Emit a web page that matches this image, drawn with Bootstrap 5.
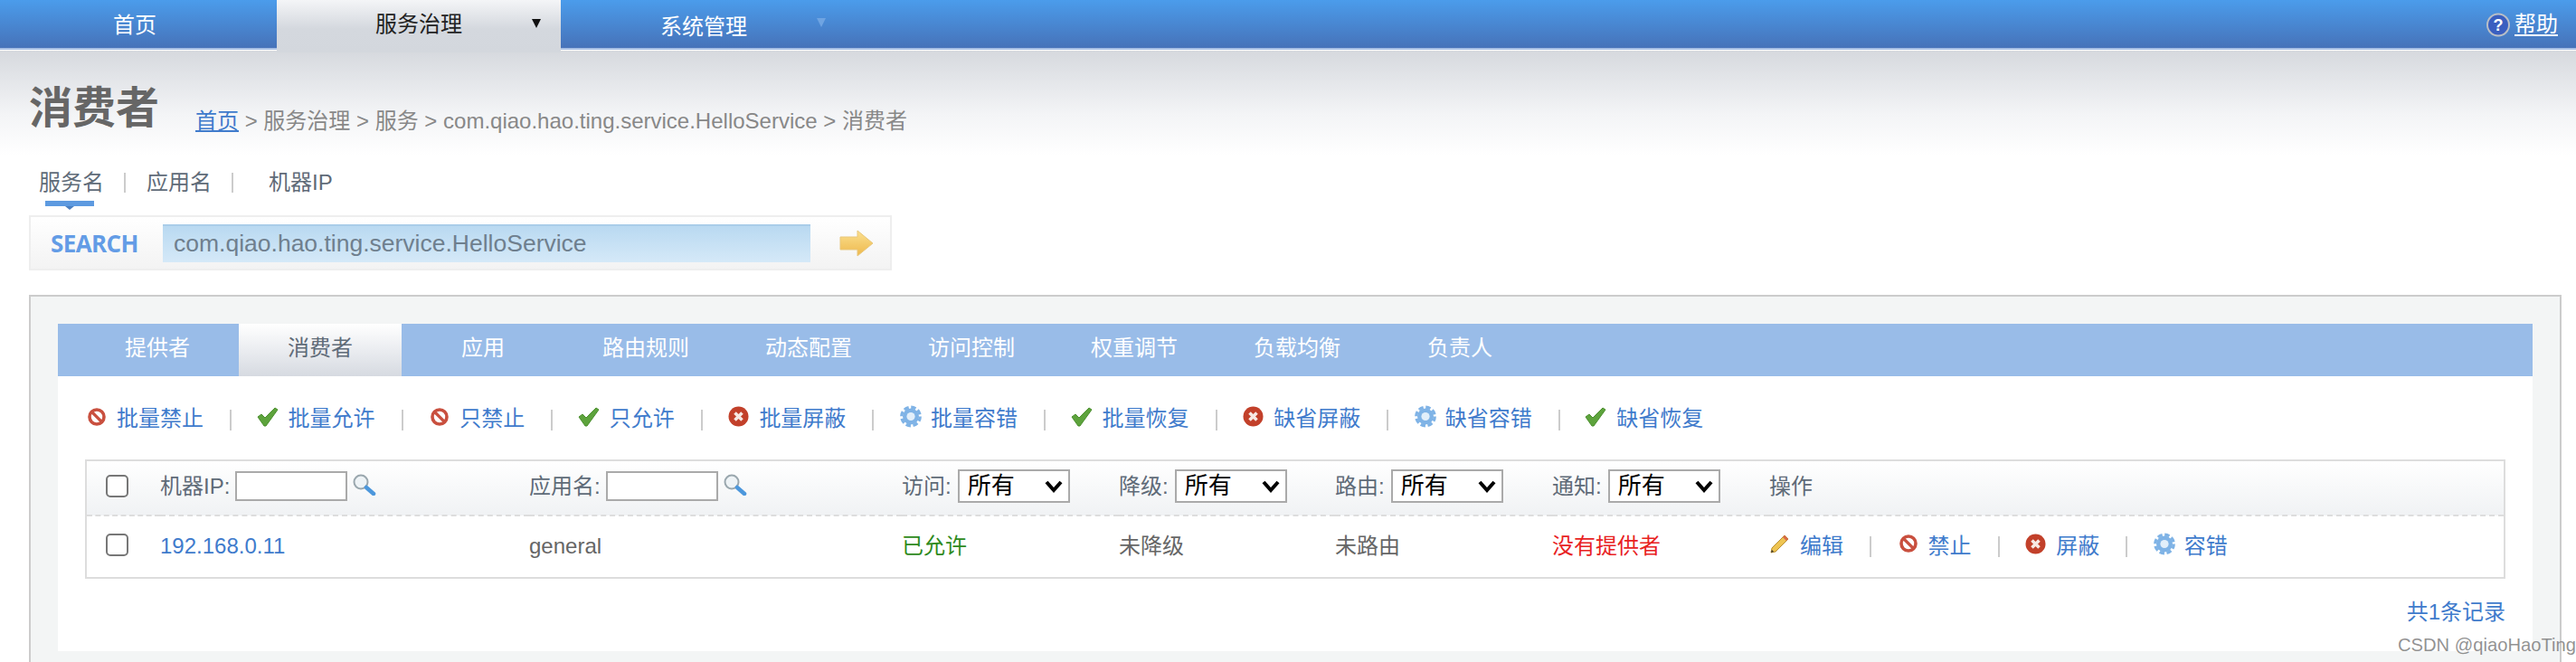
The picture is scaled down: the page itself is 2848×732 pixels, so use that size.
<!DOCTYPE html>
<html lang="zh-CN">
<head>
<meta charset="utf-8">
<title>消费者</title>
<link href="https://cdn.jsdelivr.net/npm/bootstrap@5.3.0/dist/css/bootstrap.min.css" rel="stylesheet">
<style>
html,body{height:732px;overflow:hidden;background:#fff}
body{font-family:"Liberation Sans","Noto Sans CJK SC",sans-serif;font-size:24px;line-height:32px;color:#666;position:relative}
a{text-decoration:none;color:#3f7bcc}
.topbar{height:56px;padding:0;flex-wrap:nowrap;justify-content:flex-start;align-items:stretch;background:linear-gradient(#fff,#fff) bottom/100% 1px no-repeat,linear-gradient(#a8bfe4,#a8bfe4) 0 53px/100% 2px no-repeat,linear-gradient(#4b9ceb,#4670b6)}
.topitem{color:#fff;display:flex;align-items:center;height:54px;position:relative}
.ti-home{width:306px;padding-left:125px;padding-top:1px}
.ti-svc{width:314px;padding-left:109px;padding-bottom:5px;color:#222;height:58px;background:linear-gradient(#f4f5f7,#d4d8de 55%,#d3d7dd)}
.ti-sys{width:400px;padding-left:110px;padding-top:5px}
.tri{width:0;height:0;border-left:5px solid transparent;border-right:5px solid transparent;border-top:10px solid #111}
.ti-svc .tri{margin-left:77px;margin-top:-2px}
.ti-sys .tri{margin-left:77px;margin-top:-10px;border-top-color:#6fa4e2}
.helpbox{margin-left:auto;margin-right:20px;display:flex;align-items:center;gap:5px;height:54px}
.helpbox a{color:#fff;text-decoration:underline;text-underline-offset:3px}
.pagehead{height:116px;background:linear-gradient(#d6d9de,#f3f4f6 60%,#fff);padding:36px 0 0 32px;display:flex;align-items:flex-start}
.pagetitle{font-size:48px;line-height:56px;font-weight:700;color:#666;margin:0;width:184px;flex:none}
.crumbs{color:#888;margin-top:26px;white-space:nowrap}
.crumbs a{color:#3f7bcc;text-decoration:underline}
.subtabs{height:66px;padding:14px 0 0 43px;color:#5f6b78;position:relative;display:flex}
.subtabs .st-sep{width:2px;height:22px;background:#ccc;margin:5px 23px 0 22px}
.subtabs .st-sep.wide{margin-right:39px}
.st-mark{position:absolute;left:50px;top:50px;width:54px;height:6px;background:#5d9ae0}
.st-mark::after{content:"";position:absolute;left:22px;top:6px;border-left:5px solid transparent;border-right:5px solid transparent;border-top:4px solid #4b7fc0}
.searchbar{margin-left:32px;width:954px;height:61px;border:2px solid #eee;background:linear-gradient(#fff,#f3f3f3);display:flex;align-items:center;padding-left:22px}
.searchword{font-family:"Open Sans",sans-serif;font-weight:700;font-size:26px;color:#639ce6;width:124px;letter-spacing:-.6px}
.searchinput{width:716px;height:42px;border:0;border-top:2px solid #a9cde9;background:linear-gradient(#b9d9f1,#d5e9f8);color:#6f7f8e;padding:0 12px;font-size:26.5px;font-family:inherit;outline:0;border-radius:0}
.gobtn{margin-left:32px;display:block}
.mainbox{margin:27px 0 0 32px;width:2800px;height:406px;border:2px solid #ccc;border-bottom:0;background:#f3f5f5;padding:30px 30px 0}
.tabstrip{height:58px;background:#99bce8;padding:0 0 0 20px;display:flex;margin:0;list-style:none}
.tabstrip li{width:180px;text-align:center;color:#fff;line-height:54px}
.tabstrip li.on{background:linear-gradient(#fff,#d6dae1);color:#5f6b78}
.whitepanel{background:#fff;height:304px;padding:0 30px}
.toolbar{height:92px;display:flex;align-items:center;padding-top:2px}
.act{display:flex;align-items:center;white-space:nowrap}
.iconbox{width:35px;height:24px;flex:none;display:flex;align-items:center;margin-top:-5px}
.iconbox.narrow{width:34px}
.vsep{width:2px;height:23px;background:#ccc;margin:2px 27.6px 0 29px;flex:none}
.i-ban{width:20px;height:20px;margin-left:3px}
.i-ok{width:24px;height:22px}
.i-x{width:23px;height:23px;margin-left:1px}
.i-gear{width:24px;height:25px;margin-left:1px}
.i-pen{width:23px;height:23px}
.gridframe{border:2px solid #ddd;width:2676px}
.datatable{table-layout:fixed;width:2672px;margin:0;--bs-table-bg:transparent;color:#666}
.datatable th,.datatable td{padding:0;border:0;vertical-align:middle;font-weight:400;white-space:nowrap;box-shadow:none}
.datatable thead tr{height:60px;background:linear-gradient(#fff,#f0f2f4)}
.datatable thead th{border-bottom:2px dashed #ddd;color:#5f6b78;padding-bottom:4px}
.datatable tbody tr{height:68px}
.datatable tbody td{padding-bottom:2px}
.datatable td.cc,.datatable th.cc{padding-left:21px;padding-bottom:4px}
.tick{appearance:none;-webkit-appearance:none;display:block;width:25px;height:25px;border:2px solid #777;border-radius:5px;background:#fff;margin:0}
.cellflex{display:flex;align-items:center}
.txtfilter{width:124px;height:33px;border:2px solid #aaa;background:#fff;margin-left:6px;padding:0 4px;border-radius:0;font-size:20px}
.seek{margin-left:6px;margin-top:-4px;display:block}
.dropfilter{appearance:none;-webkit-appearance:none;width:124px;height:37px;border:2px solid #aaa;border-radius:0;margin-left:7px;padding:0 0 0 9px;font-size:26px;line-height:33px;color:#000;font-family:inherit;background:#fff url("data:image/svg+xml,%3Csvg xmlns='http://www.w3.org/2000/svg' width='20' height='14'%3E%3Cpath d='M2 2l8 9 8-9' fill='none' stroke='%23000' stroke-width='4'/%3E%3C/svg%3E") no-repeat 94px 10px}
.st-ok{color:#2e8a1c}.st-bad{color:#e8221f}
.sumline{text-align:right;width:2676px;margin-top:21px;line-height:32px}
.wm{position:absolute;right:0;top:699px;font-size:20.2px;line-height:28px;color:rgba(110,110,110,.75);white-space:nowrap}
</style>
</head>
<body>
<svg width="0" height="0" class="position-absolute">
<defs>
<symbol id="s-ban" viewBox="0 0 20 20"><circle cx="10" cy="10" r="8" fill="#fff" stroke="#c9503f" stroke-width="3.6"/><path d="M4.6 4.6l10.8 10.8" stroke="#c9503f" stroke-width="3.4"/></symbol>
<symbol id="s-ok" viewBox="0 0 24 22"><path d="M1 11l4-3 4 4L20 1l3 2L10 21h-2z" fill="#5da33c" stroke="#4b8f2e" stroke-width="1"/></symbol>
<symbol id="s-x" viewBox="0 0 23 23"><circle cx="11.5" cy="11.5" r="11" fill="#c2402a"/><path d="M7.5 7.5l8 8M15.5 7.5l-8 8" stroke="#f7e9e4" stroke-width="3.6"/></symbol>
<symbol id="s-gear" viewBox="0 0 24 25"><circle cx="12" cy="12.5" r="9" fill="#7fb3e6"/><circle cx="12" cy="12.5" r="10.2" fill="none" stroke="#7fb3e6" stroke-width="3.4" stroke-dasharray="5.4 2.6"/><circle cx="12" cy="12.5" r="4.6" fill="#e2effa"/></symbol>
<symbol id="s-pen" viewBox="0 0 23 23"><path d="M17 2l4 4L7 20l-5 1 1-5z" fill="#eec452" stroke="#b98f2e" stroke-width="1"/><path d="M17 2l4 4-2 2-4-4z" fill="#d9694a"/><path d="M2 21l1-3 2 2z" fill="#333"/></symbol>
<symbol id="s-seek" viewBox="0 0 26 24"><circle cx="9" cy="9" r="7.5" fill="#eef3f6" stroke="#9aa7ae" stroke-width="2"/><path d="M15 15l8 7" stroke="#4c97dc" stroke-width="4.5" stroke-linecap="round"/></symbol>
<linearGradient id="g-go" x1="0" y1="0" x2="0" y2="1"><stop offset="0" stop-color="#fbe08f"/><stop offset="1" stop-color="#eeb84c"/></linearGradient>
</defs>
</svg>

<nav class="navbar topbar">
  <div class="topitem ti-home">首页</div>
  <div class="topitem ti-svc">服务治理<span class="tri"></span></div>
  <div class="topitem ti-sys">系统管理<span class="tri"></span></div>
  <div class="helpbox">
    <svg width="26" height="27" viewBox="0 0 26 27"><circle cx="13" cy="13.5" r="12" fill="#3a5fc0" stroke="#b9bec6" stroke-width="2"/><text x="13" y="20" text-anchor="middle" font-size="18" font-weight="700" font-family="Liberation Sans" fill="#fff">?</text></svg>
    <a href="#">帮助</a>
  </div>
</nav>

<header class="pagehead">
  <h1 class="pagetitle">消费者</h1>
  <div class="crumbs"><a href="#">首页</a> &gt; 服务治理 &gt; 服务 &gt; com.qiao.hao.ting.service.HelloService &gt; 消费者</div>
</header>

<div class="subtabs">
  <span>服务名</span><span class="st-sep"></span><span>应用名</span><span class="st-sep wide"></span><span>机器IP</span>
  <span class="st-mark"></span>
</div>

<div class="searchbar">
  <span class="searchword">SEARCH</span>
  <input class="searchinput" type="text" value="com.qiao.hao.ting.service.HelloService">
  <svg class="gobtn" width="38" height="30" viewBox="0 0 38 30"><path d="M1 8h19V1l17 14-17 14v-7H1z" fill="url(#g-go)" stroke="#e8c77c" stroke-width="1"/></svg>
</div>

<div class="mainbox">
  <ul class="tabstrip">
    <li>提供者</li><li class="on">消费者</li><li>应用</li><li>路由规则</li><li>动态配置</li><li>访问控制</li><li>权重调节</li><li>负载均衡</li><li>负责人</li>
  </ul>
  <div class="whitepanel">
    <div class="toolbar">
      <a class="act" href="#"><span class="iconbox"><svg class="i-ban"><use href="#s-ban"/></svg></span>批量禁止</a><span class="vsep"></span>
      <a class="act" href="#"><span class="iconbox"><svg class="i-ok"><use href="#s-ok"/></svg></span>批量允许</a><span class="vsep"></span>
      <a class="act" href="#"><span class="iconbox"><svg class="i-ban"><use href="#s-ban"/></svg></span>只禁止</a><span class="vsep"></span>
      <a class="act" href="#"><span class="iconbox"><svg class="i-ok"><use href="#s-ok"/></svg></span>只允许</a><span class="vsep"></span>
      <a class="act" href="#"><span class="iconbox"><svg class="i-x"><use href="#s-x"/></svg></span>批量屏蔽</a><span class="vsep"></span>
      <a class="act" href="#"><span class="iconbox"><svg class="i-gear"><use href="#s-gear"/></svg></span>批量容错</a><span class="vsep"></span>
      <a class="act" href="#"><span class="iconbox"><svg class="i-ok"><use href="#s-ok"/></svg></span>批量恢复</a><span class="vsep"></span>
      <a class="act" href="#"><span class="iconbox"><svg class="i-x"><use href="#s-x"/></svg></span>缺省屏蔽</a><span class="vsep"></span>
      <a class="act" href="#"><span class="iconbox"><svg class="i-gear"><use href="#s-gear"/></svg></span>缺省容错</a><span class="vsep"></span>
      <a class="act" href="#"><span class="iconbox"><svg class="i-ok"><use href="#s-ok"/></svg></span>缺省恢复</a>
    </div>
    <div class="gridframe">
      <table class="table datatable">
        <colgroup><col style="width:81px"><col style="width:408px"><col style="width:412px"><col style="width:240px"><col style="width:239px"><col style="width:240px"><col style="width:240px"><col></colgroup>
        <thead>
          <tr>
            <th class="cc"><input class="tick" type="checkbox"></th>
            <th><div class="cellflex">机器IP:<input class="txtfilter" type="text"><svg class="seek" width="26" height="24"><use href="#s-seek"/></svg></div></th>
            <th><div class="cellflex">应用名:<input class="txtfilter" type="text"><svg class="seek" width="26" height="24"><use href="#s-seek"/></svg></div></th>
            <th><div class="cellflex">访问:<select class="dropfilter"><option>所有</option></select></div></th>
            <th><div class="cellflex">降级:<select class="dropfilter"><option>所有</option></select></div></th>
            <th><div class="cellflex">路由:<select class="dropfilter"><option>所有</option></select></div></th>
            <th><div class="cellflex">通知:<select class="dropfilter"><option>所有</option></select></div></th>
            <th>操作</th>
          </tr>
        </thead>
        <tbody>
          <tr>
            <td class="cc"><input class="tick" type="checkbox"></td>
            <td><a href="#">192.168.0.11</a></td>
            <td>general</td>
            <td class="st-ok">已允许</td>
            <td>未降级</td>
            <td>未路由</td>
            <td class="st-bad">没有提供者</td>
            <td><div class="d-flex align-items-center">
              <a class="act" href="#"><span class="iconbox narrow"><svg class="i-pen"><use href="#s-pen"/></svg></span>编辑</a><span class="vsep"></span>
              <a class="act" href="#"><span class="iconbox"><svg class="i-ban"><use href="#s-ban"/></svg></span>禁止</a><span class="vsep"></span>
              <a class="act" href="#"><span class="iconbox"><svg class="i-x"><use href="#s-x"/></svg></span>屏蔽</a><span class="vsep"></span>
              <a class="act" href="#"><span class="iconbox"><svg class="i-gear"><use href="#s-gear"/></svg></span>容错</a>
            </div></td>
          </tr>
        </tbody>
      </table>
    </div>
    <div class="sumline"><a href="#">共1条记录</a></div>
  </div>
</div>
<div class="wm">CSDN @qiaoHaoTing</div>
</body>
</html>
